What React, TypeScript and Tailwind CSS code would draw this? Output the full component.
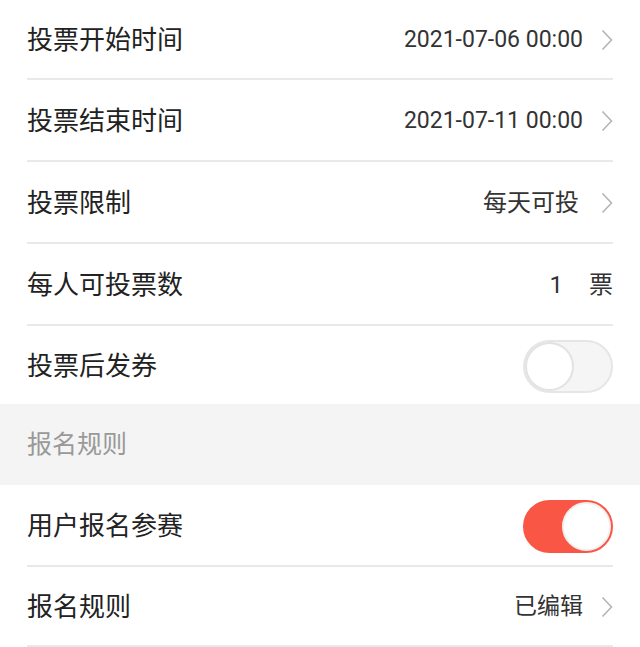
import React, { useState } from 'react';

const Chevron = ({ gap = 'ml-[18px]' }: { gap?: string }) => (
  <svg width="12" height="22" viewBox="0 0 12 22" className={`${gap} shrink-0`}>
    <path d="M1.5 1.5 L10.5 11 L1.5 20.5" fill="none" stroke="#b5b5b5" strokeWidth="1.6" />
  </svg>
);

const Toggle = ({ on, onClick }: { on: boolean; onClick: () => void }) => (
  <button
    onClick={onClick}
    className={`relative w-[90px] h-[53px] rounded-full border-2 ${on ? 'bg-[#fa5646] border-[#fa5646]' : 'bg-[#f5f5f5] border-[#e6e6e6]'}`}
  >
    <span
      className={`absolute top-[0px] w-[49px] h-[49px] rounded-full bg-white border-2 ${on ? 'right-[0px] border-[#f0f0f0]' : 'left-[0px] border-[#e2e2e2]'}`}
    />
  </button>
);

const Row = ({ label, children, h = 'h-[82px]', last }: { label: string; children?: React.ReactNode; h?: string; last?: boolean }) => (
  <div className="px-[27px] bg-white">
    <div className={`flex items-center justify-between pt-[2px] ${h} ${last ? '' : 'border-b-2 border-[#e9e9e9]'}`}>
      <span className="text-[26px] text-[#222]">{label}</span>
      <div className="flex items-center">{children}</div>
    </div>
  </div>
);

export default function App() {
  const [coupon, setCoupon] = useState(false);
  const [signup, setSignup] = useState(true);

  return (
    <div className="w-[640px] h-[647px] bg-white overflow-hidden" style={{ fontFamily: 'Roboto, "Noto Sans CJK SC", sans-serif' }}>
      <Row label="投票开始时间" h="h-[80px]">
        <span className="text-[23px] text-[#333]">2021-07-06 00:00</span>
        <Chevron />
      </Row>
      <Row label="投票结束时间">
        <span className="text-[23px] text-[#333]">2021-07-11 00:00</span>
        <Chevron />
      </Row>
      <Row label="投票限制">
        <span className="text-[24px] text-[#333]">每天可投</span>
        <Chevron gap="ml-[22px]" />
      </Row>
      <Row label="每人可投票数">
        <span className="text-[24px] text-[#333]">1</span>
        <span className="text-[24px] text-[#333] ml-[26px]">票</span>
      </Row>
      <Row label="投票后发券" h="h-[78px]" last>
        <Toggle on={coupon} onClick={() => setCoupon(!coupon)} />
      </Row>
      <div className="h-[81px] bg-[#f4f4f4] px-[27px] flex items-center">
        <span className="text-[25px] text-[#999]">报名规则</span>
      </div>
      <Row label="用户报名参赛">
        <Toggle on={signup} onClick={() => setSignup(!signup)} />
      </Row>
      <Row label="报名规则" h="h-[80px]">
        <span className="text-[23px] text-[#333]">已编辑</span>
        <Chevron />
      </Row>
    </div>
  );
}
